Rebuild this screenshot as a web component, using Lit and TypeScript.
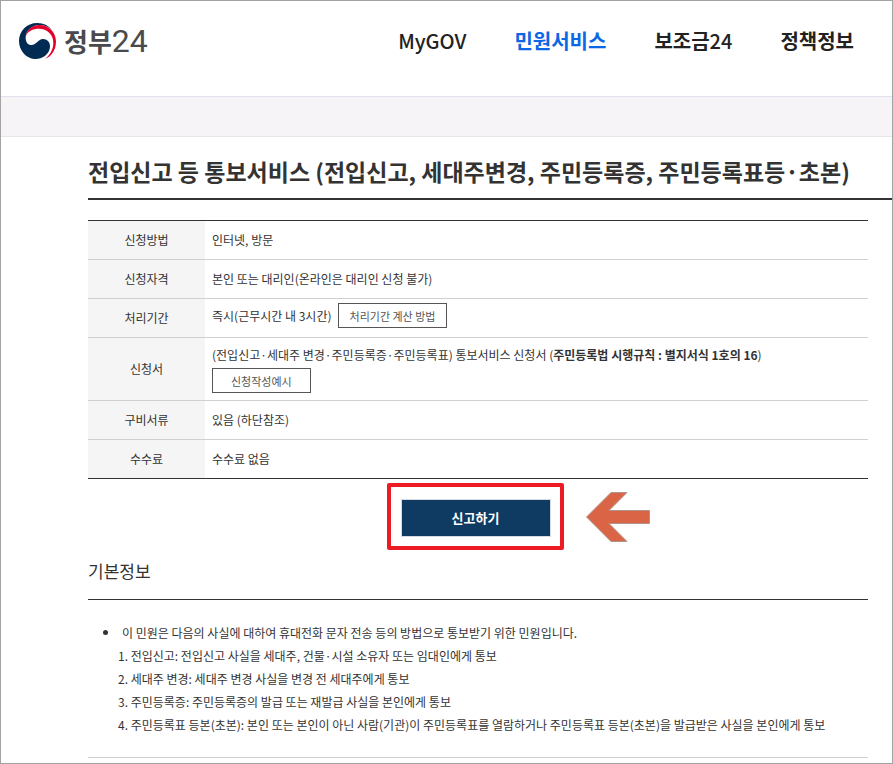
import { LitElement, html, css } from "lit";
import { customElement } from "lit/decorators.js";

const NAV = [
  { label: "", latin: "MyGOV", active: false },
  { label: "민원서비스", latin: "", active: true },
  { label: "보조금", latin: "24", active: false },
  { label: "정책정보", latin: "", active: false },
];

const NOTES = [
  "1. 전입신고: 전입신고 사실을 세대주, 건물·시설 소유자 또는 임대인에게 통보",
  "2. 세대주 변경: 세대주 변경 사실을 변경 전 세대주에게 통보",
  "3. 주민등록증: 주민등록증의 발급 또는 재발급 사실을 본인에게 통보",
  "4. 주민등록표 등본(초본): 본인 또는 본인이 아닌 사람(기관)이 주민등록표를 열람하거나 주민등록표 등본(초본)을 발급받은 사실을 본인에게 통보",
];

@customElement("app-root")
export class AppRoot extends LitElement {
  static styles = css`
    :host {
      display: block;
      box-sizing: border-box;
      min-height: 100vh;
      border: 1px solid #a3a3a3;
      background: #fff;
      color: #333;
      font: 12px/20px "Noto Sans CJK KR", sans-serif;
    }
    * { box-sizing: border-box; }
    h1, h2, p, ul, ol { margin: 0; padding: 0; }
    .header {
      display: flex;
      align-items: center;
      justify-content: space-between;
      height: 96px;
      padding: 0 38px 16px 17px;
      border-bottom: 1px solid #e0e1ec;
    }
    .brand {
      display: flex;
      align-items: center;
      gap: 7px;
      color: #4a4a4c;
      text-decoration: none;
      font-size: 26px;
      line-height: 40px;
      font-weight: 700;
    }
    .name { display: flex; align-items: baseline; }
    .digits { font-family: Roboto, sans-serif; font-size: 32px; font-weight: 400; }
    .nav { display: flex; gap: 48px; }
    .link {
      color: #222;
      text-decoration: none;
      font-size: 20px;
      line-height: 28px;
      font-weight: 700;
    }
    .latin { font-weight: 500; }
    .active { color: #0b67e6; }
    .strip { height: 40px; background: #f6f4f6; border-bottom: 1px solid #e8e6e9; }
    .main { padding-left: 87px; }
    .title {
      padding: 18px 0 11px;
      border-bottom: 2px solid #333336;
      font-size: 23px;
      line-height: 32px;
      font-weight: 700;
      white-space: nowrap;
    }
    .body { padding: 20px 24px 0 0; }
    .table {
      width: 100%;
      border-collapse: separate;
      border-spacing: 0;
      border-top: 1px solid #333;
      border-bottom: 1px solid #333;
    }
    .table th {
      width: 117px;
      height: 39px;
      padding: 0;
      background: #f5f5f5;
      font-weight: 400;
      text-align: center;
    }
    .table th, .table td { border-bottom: 1px solid #d0d0d0; }
    .table td { padding: 0 7px; }
    .table tr:last-child th, .table tr:last-child td { height: 38px; border-bottom: 0; }
    .line { display: flex; align-items: center; gap: 6px; padding-bottom: 5px; }
    .form { display: flex; flex-direction: column; align-items: flex-start; gap: 3px; padding: 7px 0; }
    .small {
      height: 25px;
      padding: 0 11px;
      border: 1px solid #555;
      background: #fff;
      color: #555;
      font: inherit;
      font-size: 11px;
    }
    .wide { padding: 0 18px; }
    .action {
      display: grid;
      grid-template-columns: 1fr auto 1fr;
      align-items: center;
      gap: 22px;
      margin-top: 4px;
      padding-right: 6px;
    }
    .frame { grid-column: 2; padding: 12px 9px 9px 10px; border: 4px solid #ed1c24; border-radius: 2px; }
    .submit {
      display: block;
      width: 150px;
      height: 38px;
      border: 1px solid #d5dbe2;
      background: #0f3b63;
      color: #fff;
      font: inherit;
      font-size: 13px;
      font-weight: 700;
    }
    .section {
      padding: 9px 0 16px;
      border-bottom: 1px solid #333;
      font-size: 17px;
      line-height: 24px;
      font-weight: 400;
    }
    .info { padding: 21px 0; border-bottom: 1px solid #d0d0d0; line-height: 23px; }
    .lead { display: flex; align-items: center; gap: 14px; padding-left: 15px; }
    .lead::before { content: ""; width: 5px; height: 5px; border-radius: 50%; background: #333; }
    .info ul, .info ol { list-style: none; }
    .info ol { padding-left: 30px; }
  `;

  render() {
    return html`
      <header class="header">
        <a class="brand" href="#">
          <svg width="39" height="38" viewBox="54 66 117 114" aria-hidden="true">
            <path
              fill="#002b52"
              d="M156 90A55 55 0 0 0 112 69C80 69 57 93 57 123C57 153 80 177 106 177C131 177 150 160 150 139C150 126 141 117 129 117C114 117 110 135 94 135C84 135 77 127 77 113C77 92 96 75 118 75C132 75 146 80 156 90Z"
            />
            <path
              fill="#e4002b"
              d="M77 109C80 90 96 75 118 75C146 75 168 97 168 125C168 150 153 171 134 177C149 167 160 149 160 128C160 103 141 86 117 86C98 86 83 94 77 109Z"
            />
          </svg>
          <span class="name">정부<span class="digits">24</span></span>
        </a>
        <nav class="nav">
          ${NAV.map(
            (n) => html`<a class="link ${n.active ? "active" : ""}" href="#">${n.label}<span class="latin">${n.latin}</span></a>`
          )}
        </nav>
      </header>
      <div class="strip"></div>
      <main class="main">
        <h1 class="title">전입신고 등 통보서비스 (전입신고, 세대주변경, 주민등록증, 주민등록표등·초본)</h1>
        <div class="body">
          <table class="table">
            <tr><th scope="row">신청방법</th><td>인터넷, 방문</td></tr>
            <tr><th scope="row">신청자격</th><td>본인 또는 대리인(온라인은 대리인 신청 불가)</td></tr>
            <tr>
              <th scope="row">처리기간</th>
              <td><div class="line">즉시(근무시간 내 3시간)<button class="small">처리기간 계산 방법</button></div></td>
            </tr>
            <tr>
              <th scope="row">신청서</th>
              <td>
                <div class="form">
                  <span>(전입신고·세대주 변경·주민등록증·주민등록표) 통보서비스 신청서 (<b>주민등록법 시행규칙 : 별지서식 1호의 16</b>)</span>
                  <button class="small wide">신청작성예시</button>
                </div>
              </td>
            </tr>
            <tr><th scope="row">구비서류</th><td>있음 (하단참조)</td></tr>
            <tr><th scope="row">수수료</th><td>수수료 없음</td></tr>
          </table>
          <div class="action">
            <div class="frame"><button class="submit">신고하기</button></div>
            <svg width="64" height="50" viewBox="0 0 64 50" aria-hidden="true">
              <path d="M.5 25 25 .5H41L23 18.500H63.500V31.500H23L41 49.500H25Z" fill="#d96546" stroke="#b0958f" />
            </svg>
          </div>
          <h2 class="section">기본정보</h2>
          <div class="info">
            <ul><li class="lead">이 민원은 다음의 사실에 대하여 휴대전화 문자 전송 등의 방법으로 통보받기 위한 민원입니다.</li></ul>
            <ol>${NOTES.map((n) => html`<li>${n}</li>`)}</ol>
          </div>
        </div>
      </main>
    `;
  }
}
